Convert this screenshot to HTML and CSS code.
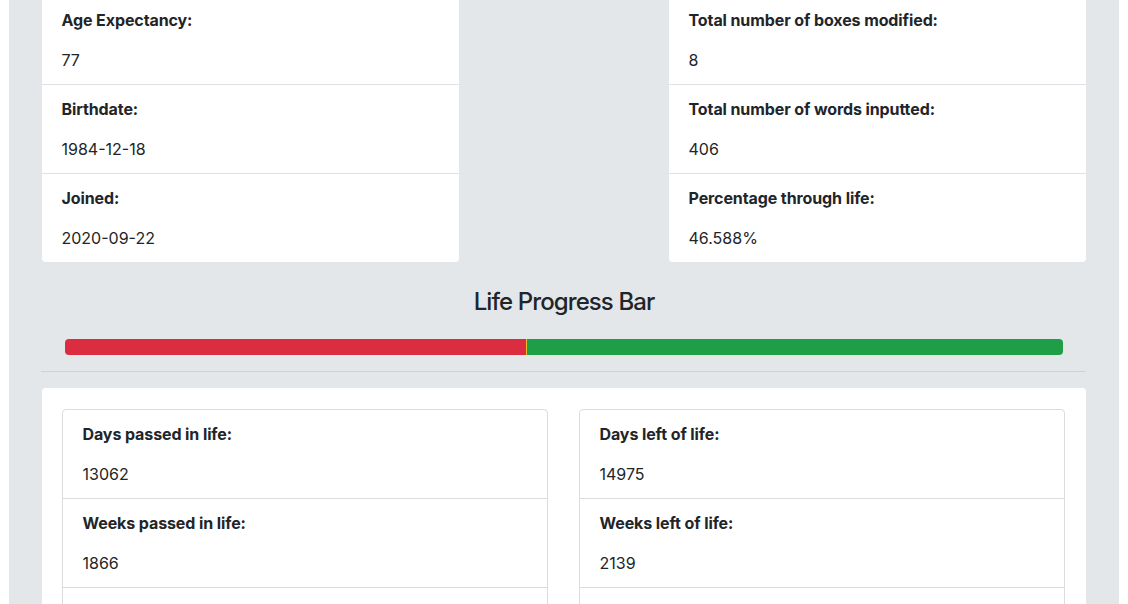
FILE: index.html
```html
<!DOCTYPE html>
<html lang="en">
<head>
<meta charset="utf-8">
<title>Life Stats</title>
<link rel="stylesheet" href="styles.css">
</head>
<body>
<main class="panel">
  <section class="top-row">
    <div class="card list">
      <div class="item"><p class="label">Age Expectancy:</p><p class="value">77</p></div>
      <div class="item"><p class="label">Birthdate:</p><p class="value">1984-12-18</p></div>
      <div class="item"><p class="label">Joined:</p><p class="value">2020-09-22</p></div>
    </div>
    <div class="card list">
      <div class="item"><p class="label">Total number of boxes modified:</p><p class="value">8</p></div>
      <div class="item"><p class="label">Total number of words inputted:</p><p class="value">406</p></div>
      <div class="item"><p class="label">Percentage through life:</p><p class="value">46.588%</p></div>
    </div>
  </section>

  <h4 class="title">Life Progress Bar</h4>
  <div class="progress">
    <div class="bar bar-passed" style="width: 46.2%"></div>
    <div class="bar bar-now" style="width: 1px"></div>
    <div class="bar bar-left"></div>
  </div>
  <hr class="divider">

  <section class="big-card">
    <div class="inner-card">
      <div class="item"><p class="label">Days passed in life:</p><p class="value">13062</p></div>
      <div class="item"><p class="label">Weeks passed in life:</p><p class="value">1866</p></div>
      <div class="item item-more"></div>
    </div>
    <div class="inner-card">
      <div class="item"><p class="label">Days left of life:</p><p class="value">14975</p></div>
      <div class="item"><p class="label">Weeks left of life:</p><p class="value">2139</p></div>
      <div class="item item-more"></div>
    </div>
  </section>
</main>
</body>
</html>
```
FILE: styles.css
```css
* { box-sizing: border-box; }

html, body {
  margin: 0;
  padding: 0;
  background: #ffffff;
  height: 100%;
  overflow: hidden;
}

body {
  font-family: Inter, "Noto Sans", "Liberation Sans", sans-serif;
  font-size: 16px;
  line-height: 24px;
  color: #212529;
}

.panel {
  width: 1110px;
  min-height: 700px;
  margin: 0 auto;
  background: #e4e7ea;
  padding: 0 33px 40px;
}

.top-row {
  display: flex;
  justify-content: space-between;
  margin-top: -4px;
}

.card {
  background: #fff;
  border-radius: 4px;
}

.list {
  width: 417px;
}

.item {
  padding: 12px 20px 12px 19.5px;
  border-bottom: 1px solid #dfe1e4;
}

.item:last-child {
  border-bottom: none;
}

.item-more {
  height: 88px;
}

.label {
  margin: 0 0 16px;
  font-weight: 700;
  letter-spacing: -0.1px;
}

.value {
  margin: 0;
}

.title {
  margin: 26px 0 0;
  font-size: 24px;
  line-height: 28.8px;
  font-weight: 500;
  text-align: center;
  letter-spacing: -0.9px;
}

.progress {
  display: flex;
  height: 16px;
  margin: 22px 23px 16px;
  border-radius: 4px;
  overflow: hidden;
  background: #e9ecef;
}

.bar { height: 100%; }
.bar-passed { background: #dc2c40; }
.bar-now { background: #f0b82a; flex: none; }
.bar-left { background: #1f9d47; flex: 1; }

.divider {
  margin: 0 0 16px -1px;
  border: 0;
  border-top: 1px solid #cfd2d5;
  height: 0;
}

.big-card {
  background: #fff;
  border-radius: 4px;
  padding: 21px 20px 20px;
  display: grid;
  grid-template-columns: 486px 486px;
  column-gap: 31px;
}

.inner-card {
  border: 1px solid #dcdcdc;
  border-radius: 4px;
}

.inner-card .item {
  padding-left: 19.5px;
  border-bottom: 1px solid #dcdcdc;
}

.inner-card .item:last-child { border-bottom: none; }
```
